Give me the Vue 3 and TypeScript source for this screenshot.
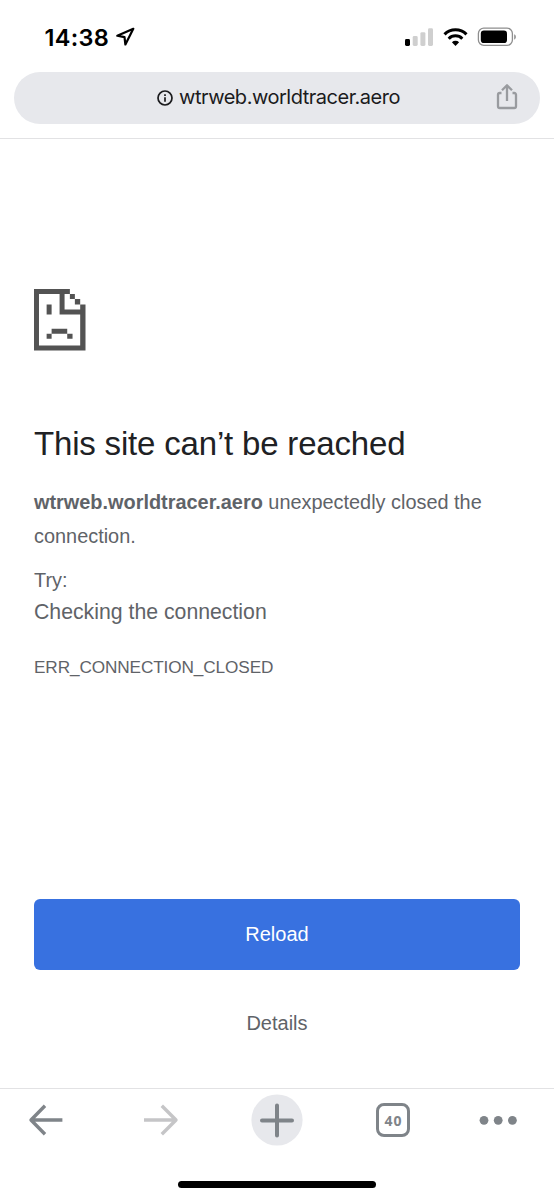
<script setup lang="ts">
const host: string = 'wtrweb.worldtracer.aero'
const openTabs: number = 40
</script>

<template>
  <div class="screen">
    <header class="status">
      <span class="time">14:38</span>
      <svg class="location" width="22" height="22" viewBox="0 0 22 22">
        <path d="M18.3 2.8 2.3 9.7l7.2 1.5.9 7.3Z" fill="none" stroke="#000" stroke-width="2.2" stroke-linejoin="round" />
      </svg>
      <svg class="signals" width="116" height="24" viewBox="0 0 116 24">
        <rect x="1" y="14" width="5" height="7" rx="1.4" fill="#000" />
        <g fill="#cfcfcf">
          <rect x="8.7" y="11" width="5" height="10" rx="1.4" />
          <rect x="16.4" y="7.2" width="5" height="13.8" rx="1.4" />
          <rect x="24" y="3.2" width="5" height="17.8" rx="1.4" />
        </g>
        <g fill="none" stroke="#000" stroke-width="3">
          <path d="M40.5 9.4a15.5 15.5 0 0 1 22 0" />
          <path d="M44.7 13.7a9.5 9.5 0 0 1 13.6 0" />
        </g>
        <path d="M47.9 17.2a5.1 5.1 0 0 1 7.2 0L51.5 21Z" fill="#000" />
        <rect x="74.4" y="3.2" width="34" height="17.2" rx="5.4" fill="none" stroke="#8e8e8e" stroke-width="1.3" />
        <rect x="76.8" y="5.6" width="26.2" height="12.4" rx="3.1" fill="#000" />
        <path d="M110.2 9.2c2.2.7 2.2 4.6 0 5.3Z" fill="#8e8e8e" />
      </svg>
    </header>

    <div class="address-row">
      <div class="address">
        <svg class="info" width="16" height="16" viewBox="0 0 16 16">
          <circle cx="8" cy="8" r="7" fill="none" stroke="#1b1b1d" stroke-width="1.7" />
          <path d="M8 7.2v4.5M8 4.2v1.7" stroke="#1b1b1d" stroke-width="1.7" />
        </svg>
        <span class="url">{{ host }}</span>
        <svg class="share" width="22" height="28" viewBox="0 0 22 28">
          <g fill="none" stroke="#999b9f" stroke-width="2.3" stroke-linejoin="round">
            <path d="M5.5 10H3.8Q2 10 2 11.8v11.4Q2 25 3.8 25h14.4q1.8 0 1.8-1.8V11.8Q20 10 18.2 10h-1.7" />
            <path d="M11 18V2.3M6 7.3l5-5 5 5" />
          </g>
        </svg>
      </div>
    </div>

    <main class="page">
      <svg class="sad" width="51.5" height="61.5" viewBox="0 0 155 184" preserveAspectRatio="none" fill="#535353">
        <path d="M0 0H108V15H92V61H139V46H155V184H0ZM15 15V169H139V76H77V15Z" fill-rule="evenodd" />
        <path d="M108 15h15v15h-15zM123 30h16v16h-16zM38 46h15v30H38zM53 119h47v15H53zM38 134h15v15H38zM100 134h16v15h-16z" />
      </svg>
      <h1>This site can’t be reached</h1>
      <div class="summary">
        <div class="line"><strong>{{ host }}</strong><span>unexpectedly closed the</span></div>
        <div class="line">connection.</div>
      </div>
      <div class="try">Try:</div>
      <div class="hint">Checking the connection</div>
      <div class="code">ERR_CONNECTION_CLOSED</div>
      <div class="actions">
        <button class="reload">Reload</button>
        <button class="details">Details</button>
      </div>
    </main>

    <footer class="toolbar">
      <nav class="tools">
        <svg class="back" width="36" height="34" viewBox="0 0 36 34">
          <path d="M34.4 17H3M17 2.8 3 17l14 14.2" fill="none" stroke="#7f8489" stroke-width="3.4" stroke-linejoin="round" />
        </svg>
        <svg class="forward" width="36" height="34" viewBox="0 0 36 34">
          <path d="M0 17h32M17.8 2.8 32 17 17.8 31.2" fill="none" stroke="#c5c5c7" stroke-width="3.4" stroke-linejoin="round" />
        </svg>
        <svg class="plus" width="52" height="52" viewBox="0 0 52 52">
          <circle cx="26" cy="26" r="25.6" fill="#e7e8ec" />
          <path d="M26 11.4v30M11 26.4h30" stroke="#7f8489" stroke-width="4" stroke-linecap="round" />
        </svg>
        <div class="tabs">{{ openTabs }}</div>
        <svg class="more" width="38" height="10" viewBox="0 0 38 10" fill="#7f8489">
          <circle cx="5" cy="5.3" r="4.4" />
          <circle cx="19.2" cy="5.3" r="4.4" />
          <circle cx="33.4" cy="5.3" r="4.4" />
        </svg>
      </nav>
      <div class="home"></div>
    </footer>
  </div>
</template>

<style>
body {
  margin: 0;
  background: #fff;
}
</style>

<style scoped>
.screen {
  width: 554px;
  height: 1200px;
  display: flex;
  flex-direction: column;
  overflow: hidden;
  background: #fff;
  font-family: "Liberation Sans", Arial, sans-serif;
}
.status {
  height: 72px;
  box-sizing: border-box;
  padding: 23px 38px 0 44.5px;
  display: flex;
  align-items: flex-start;
}
.time {
  width: 65px;
  font: 600 23.5px/29px Inter, sans-serif;
  letter-spacing: 0.3px;
  white-space: nowrap;
  color: #000;
}
.location {
  margin: 3px 0 0 5.5px;
}
.signals {
  margin: 2px -4px 0 auto;
}
.address-row {
  flex: none;
  height: 67px;
  box-sizing: border-box;
  padding: 0 14px;
  border-bottom: 1px solid #e2e2e4;
}
.address {
  height: 52px;
  border-radius: 26px;
  background: #e7e8ec;
  display: flex;
  align-items: center;
}
.info {
  margin: 0 0 0 143px;
}
.url {
  margin: -3px 0 0 6px;
  font: 400 20px/28px Inter, sans-serif;
  letter-spacing: -0.48px;
  white-space: nowrap;
  color: #1b1b1d;
}
.share {
  margin: -2px 22px 0 auto;
}
.page {
  flex: 1;
  display: flex;
  flex-direction: column;
  padding: 150px 34px 0;
  color: #5f6368;
}
.sad {
  flex: none;
}
h1 {
  margin: 73px 0 0;
  font-size: 33px;
  line-height: 40px;
  letter-spacing: -0.18px;
  font-weight: 400;
  color: #202124;
  white-space: nowrap;
}
.summary {
  margin-top: 21px;
  font-size: 19.9px;
  line-height: 34px;
}
.line {
  display: flex;
  gap: 5.5px;
  white-space: nowrap;
}
.try {
  margin-top: 11px;
  font-size: 19.9px;
  line-height: 32px;
}
.hint {
  font-size: 21.25px;
  line-height: 32px;
}
.code {
  margin-top: 25px;
  font-size: 17.2px;
  line-height: 28px;
  letter-spacing: -0.11px;
}
.actions {
  margin-top: auto;
  padding-bottom: 41px;
  display: flex;
  flex-direction: column;
  gap: 29px;
}
button {
  border: 0;
  padding: 0;
  font: 400 20px/24px "Liberation Sans", Arial, sans-serif;
}
.reload {
  height: 71px;
  padding-bottom: 2px;
  border-radius: 6px;
  background: #3871e0;
  color: #fff;
}
.details {
  height: 48px;
  background: transparent;
  color: #5f6368;
}
.toolbar {
  height: 112px;
  box-sizing: border-box;
  border-top: 1px solid #e2e2e4;
  display: flex;
  flex-direction: column;
  align-items: center;
}
.tools {
  width: 100%;
  height: 52px;
  margin-top: 5px;
  box-sizing: border-box;
  padding-left: 28px;
  display: flex;
  align-items: center;
}
.forward {
  margin-left: 80px;
}
.plus {
  margin-left: 71px;
}
.tabs {
  width: 34px;
  height: 34px;
  margin-left: 73px;
  box-sizing: border-box;
  border: 3px solid #7f8489;
  border-radius: 8px;
  padding-left: 1px;
  text-align: center;
  font: 700 14px/29px "Open Sans", sans-serif;
  letter-spacing: 1px;
  color: #7f8489;
}
.more {
  margin-left: 69px;
}
.home {
  width: 198px;
  height: 7px;
  margin-top: 35px;
  border-radius: 4px;
  background: #000;
}
</style>
